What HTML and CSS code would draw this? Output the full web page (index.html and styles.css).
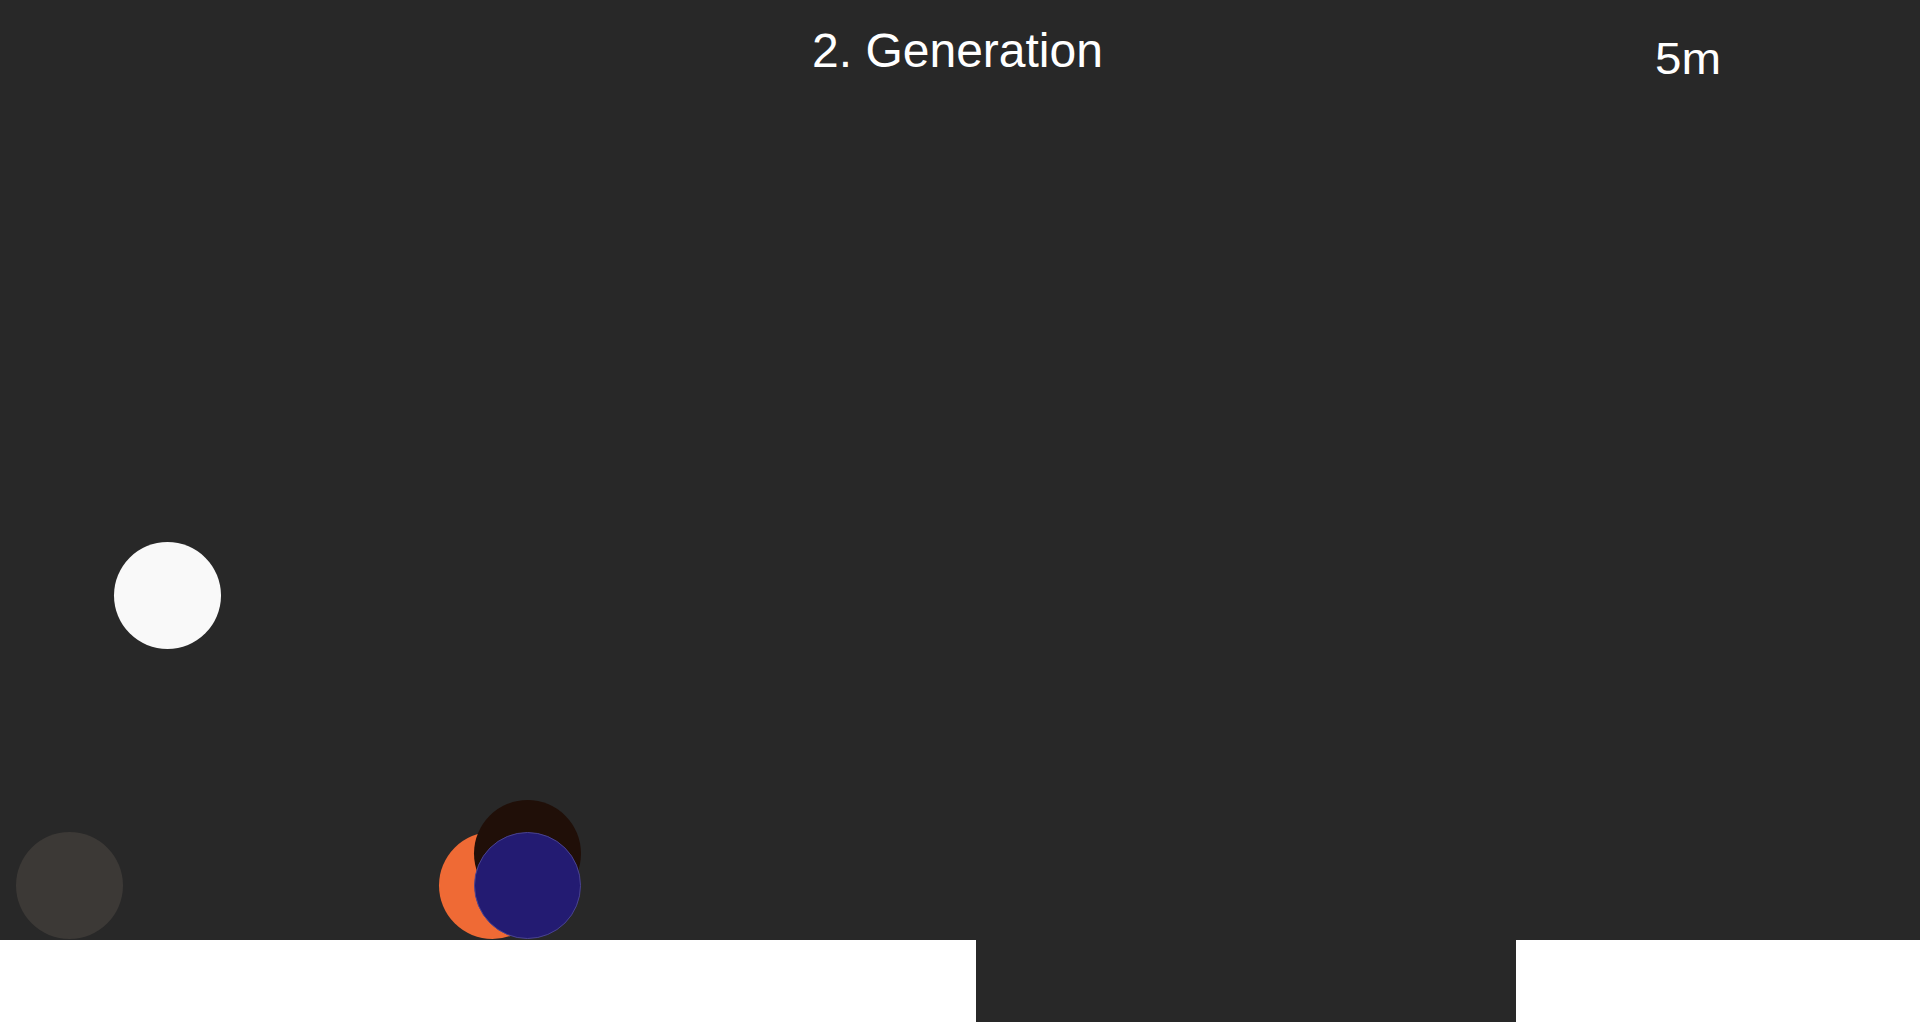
FILE: index.html
```html
<!DOCTYPE html>
<html lang="de">
<head>
<meta charset="utf-8">
<title>2. Generation</title>
<link rel="stylesheet" href="styles.css">
</head>
<body>
<div class="game">
  <div class="stage">
    <div class="hud-title">2. Generation</div>
    <div class="hud-distance">5m</div>
    <div class="ball ball-white"></div>
    <div class="ball ball-gray"></div>
    <div class="ball ball-orange"></div>
    <div class="ball ball-brown"></div>
    <div class="ball ball-blue"></div>
  </div>
  <div class="ground">
    <div class="ground-block ground-left"></div>
    <div class="ground-gap"></div>
    <div class="ground-block ground-right"></div>
  </div>
</div>
</body>
</html>
```
FILE: styles.css
```css
html, body {
  margin: 0;
  padding: 0;
  background: #282828;
  overflow: hidden;
}
body {
  font-family: "Liberation Sans", Arial, sans-serif;
  color: #ffffff;
}
.game {
  width: 1920px;
  height: 1022px;
  display: flex;
  flex-direction: column;
}
.stage {
  position: relative;
  height: 940px;
  flex: none;
}
.hud-title {
  position: absolute;
  left: 0;
  right: 5px;
  top: 27px;
  text-align: center;
  font-size: 48px;
  line-height: 48px;
}
.hud-distance {
  position: absolute;
  left: 1655px;
  top: 37px;
  font-size: 44px;
  line-height: 44px;
  transform: scaleX(1.08);
  transform-origin: left top;
}
.ball {
  position: absolute;
  width: 107px;
  height: 107px;
  border-radius: 50%;
  box-sizing: border-box;
}
.ball-white { left: 114px; top: 542px; background: #f9f9f9; }
.ball-gray { left: 16px; top: 832px; background: #3c3936; }
.ball-orange { left: 439px; top: 832px; background: #ef6a35; }
.ball-brown { left: 474px; top: 800px; background: #200f08; }
.ball-blue { left: 474px; top: 832px; background: #231b72; border: 1px solid #4a4390; }
.ground {
  flex: 1;
  display: flex;
}
.ground-block {
  background: #ffffff;
}
.ground-left { width: 976px; }
.ground-gap { width: 540px; }
.ground-right { flex: 1; }
```
